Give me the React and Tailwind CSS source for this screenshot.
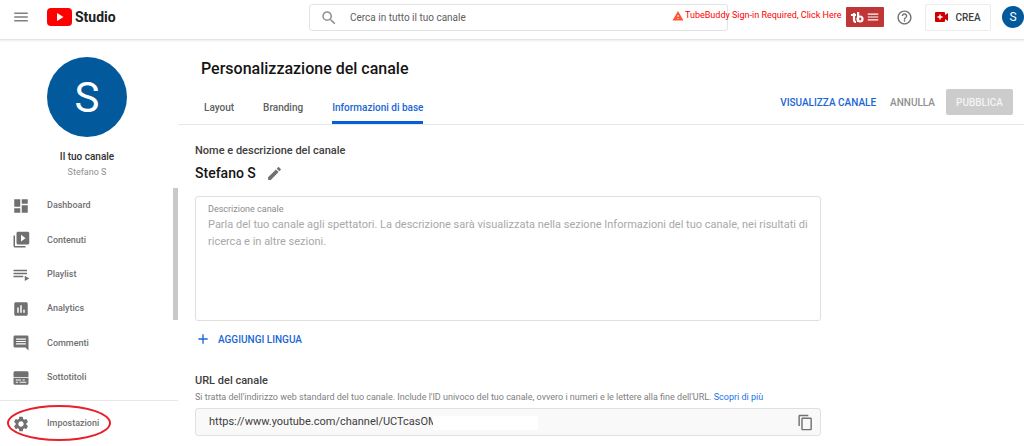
import React from 'react'
import {
    MdAdd,
    MdContentCopy,
    MdDashboard,
    MdEdit,
    MdHelpOutline,
    MdInsertChart,
    MdMenu,
    MdSearch,
    MdSettings,
    MdWarning,
} from 'react-icons/md'

function VideosIcon({ size }) {
    return (
        <svg width={size} height={size} viewBox="0 0 24 24" fill="currentColor">
            <path fillRule="evenodd" d="M8 1h13c1.100 0 2 .9 2 2v13c0 1.100-.9 2-2 2H8c-1.100 0-2-.9-2-2V3c0-1.100.9-2 2-2zM12 5v9l6-4.500z" />
            <path d="M2 6h2v14h14v2H4c-1.100 0-2-.9-2-2z" />
        </svg>
    )
}

function PlaylistIcon({ size }) {
    return (
        <svg width={size} height={size} viewBox="0 0 24 24" fill="currentColor">
            <path d="M2 5h18v2H2zM2 9h18v2H2zM2 13h13v2H2zM17 13l6 3.500-6 3.500z" />
        </svg>
    )
}

function CommentIcon({ size }) {
    return (
        <svg width={size} height={size} viewBox="0 0 24 24" fill="currentColor">
            <path d="M22 4c0-1.100-.9-2-2-2H4c-1.100 0-2 .9-2 2v12c0 1.100.9 2 2 2h14l4 4V4zM18.500 14h-13v-1.700h13V14zm0-3.200h-13V9.200h13v1.600zm0-3.200h-13V6h13v1.600z" />
        </svg>
    )
}

function SubtitlesIcon({ size }) {
    return (
        <svg width={size} height={size} viewBox="0 0 24 24" fill="currentColor">
            <path
                fillRule="evenodd"
                d="M4 3h16c1.100 0 2 .9 2 2v14c0 1.100-.9 2-2 2H4c-1.100 0-2-.9-2-2V5c0-1.100.9-2 2-2zM2 10.500v1.200h20V10.500zM5 14v1.300h7V14zM14 14v1.300h3V14zM5 17v1.300h3V17zM10 17v1.300h9V17z"
            />
        </svg>
    )
}

const navItems = [
    { label: 'Dashboard', Icon: MdDashboard },
    { label: 'Contenuti', Icon: VideosIcon },
    { label: 'Playlist', Icon: PlaylistIcon },
    { label: 'Analytics', Icon: MdInsertChart },
    { label: 'Commenti', Icon: CommentIcon },
    { label: 'Sottotitoli', Icon: SubtitlesIcon },
]

const tabs = ['Layout', 'Branding', 'Informazioni di base']

function Logo() {
    return (
        <a href="#" className="flex items-center gap-[3px]">
            <svg width="25" height="18" viewBox="0 0 25 18">
                <rect width="25" height="18" rx="4" fill="#ff0000" />
                <path d="M10 5l6.500 4-6.500 4z" fill="#fff" />
            </svg>
            <span className="text-[14px] leading-5 font-bold text-[#212121]">Studio</span>
        </a>
    )
}

function Header() {
    return (
        <header className="flex h-10 items-start border-b border-[#e4e4e4] shadow-[0_1px_2px_rgba(0,0,0,0.08)]">
            <div className="flex h-[34px] w-[309px] shrink-0 items-center gap-[17px] pl-3">
                <button aria-label="Menu" className="text-[#808080]">
                    <MdMenu size={18} />
                </button>
                <Logo />
            </div>
            <label className="mt-1 flex h-[27px] flex-1 items-center gap-3 rounded-[3px] border border-[#e3e3e3] pl-[10px]">
                <MdSearch size={18} className="shrink-0 text-[#909090]" />
                <input
                    type="text"
                    aria-label="Cerca"
                    placeholder="Cerca in tutto il tuo canale"
                    className="w-full min-w-0 text-[10px] outline-none placeholder:text-[#606060]"
                />
            </label>
            <div className="-ml-14 flex h-[34px] shrink-0 items-center">
                <a href="#" className="flex w-[174px] items-center gap-px pb-[2px] text-[9px] whitespace-nowrap text-[#ff0000]">
                    <MdWarning size={12} className="text-[#ff5533]" />
                    TubeBuddy Sign-in Required, Click Here
                </a>
                <button aria-label="TubeBuddy" className="flex h-5 w-[38px] items-center justify-center gap-[2px] rounded-[1px] bg-[#c03535] text-white">
                    <svg width="13" height="11" viewBox="0 0 13 11" fill="none" stroke="currentColor" strokeWidth="2.200">
                        <path d="M0 3h5M3 1v7q0 2 2 2M7.100 0v10" />
                        <circle cx="9" cy="7" r="2.500" />
                    </svg>
                    <MdMenu size={14} />
                </button>
                <button aria-label="Guida" className="ml-3 text-[#707070]">
                    <MdHelpOutline size={17} />
                </button>
                <button className="ml-3 flex h-[27px] w-[66px] items-center justify-center gap-[7px] rounded-[2px] border border-[#ececec] text-[10px] font-medium text-[#404040]">
                    <svg width="13" height="10" viewBox="0 0 13 10">
                        <path d="M1 0h8q1 0 1 1v2l3-2v8l-3-2v2q0 1-1 1H1q-1 0-1-1V1q0-1 1-1z" fill="#cc0000" />
                        <path d="M5 2.500v5M2.500 5h5" stroke="#fff" strokeWidth="1.400" />
                    </svg>
                    CREA
                </button>
                <div className="ml-[11px] w-[22px] overflow-hidden">
                    <div className="flex size-[22px] items-center justify-center rounded-full bg-[#02599c] text-[12px] text-white">S</div>
                </div>
            </div>
        </header>
    )
}

function Sidebar() {
    return (
        <aside className="w-[178px] shrink-0">
            <div className="flex h-[148px] flex-col items-center pt-[17px] pr-1">
                <div className="flex size-20 items-center justify-center rounded-full bg-[#02599c] text-[42px] text-white">S</div>
                <p className="mt-3 text-[10px] leading-4 font-medium text-[#303030]">Il tuo canale</p>
                <p className="text-[9px] leading-[14px] text-[#909090]">Stefano S</p>
            </div>
            <div className="flex h-[213px] items-start border-b border-[#e6e6e6]">
                <nav className="grid h-[207px] flex-1 grid-rows-6 pt-px">
                    {navItems.map(({ label, Icon }) => (
                        <a key={label} href="#" className="flex items-center gap-[17px] pl-3 text-[9px] font-medium text-[#707070]">
                            <Icon size={18} />
                            {label}
                        </a>
                    ))}
                </nav>
                <div className="h-[132px] w-[5px] bg-[#c9c9c9]" />
            </div>
            <a href="#" className="relative flex h-[45px] items-center gap-[17px] pl-3 text-[9px] font-medium text-[#707070]">
                <MdSettings size={18} />
                Impostazioni
                <span className="absolute top-1 left-[7px] h-9 w-[104px] rounded-[50%] border-2 border-[#e8202c]" />
            </a>
        </aside>
    )
}

export default function App() {
    return (
        <div className="bg-white font-[Roboto,sans-serif]">
            <Header />
            <div className="flex">
                <Sidebar />
                <main className="min-w-0 flex-1">
                    <h1 className="pt-[18px] pl-[23px] text-[16px] leading-[22px] font-medium text-[#151515]">
                        Personalizzazione del canale
                    </h1>
                    <div className="flex h-[45px] items-end justify-between border-b border-[#e6e6e6] pr-[11px] pl-[26px]">
                        <div role="tablist" className="flex gap-[29px] self-stretch pt-[13px] text-[10px] font-medium">
                            {tabs.map((tab) => (
                                <button
                                    key={tab}
                                    role="tab"
                                    aria-selected={tab === 'Informazioni di base'}
                                    className="rounded-t-[1px] border-b-3 border-transparent text-[#606060] aria-selected:border-[#065fd4] aria-selected:text-[#1a66d6]"
                                >
                                    {tab}
                                </button>
                            ))}
                        </div>
                        <div className="flex items-center pb-[9px] text-[10px] font-medium">
                            <a href="#" className="text-[#1a66d6]">VISUALIZZA CANALE</a>
                            <button className="ml-[14px] text-[#909090]">ANNULLA</button>
                            <button disabled className="ml-[11px] h-[26px] w-[67px] rounded-[2px] bg-[#cccccc] text-[#f4f4f4]">PUBBLICA</button>
                        </div>
                    </div>

                    <section className="max-w-[643px] pt-[18px] pl-[17px]">
                        <h2 className="text-[11px] leading-4 font-medium text-[#404040]">Nome e descrizione del canale</h2>
                        <div className="mt-1 flex h-5 items-center gap-[10px] text-[14px] font-medium text-[#151515]">
                            Stefano S
                            <button aria-label="Modifica" className="text-[#707070]">
                                <MdEdit size={17} />
                            </button>
                        </div>
                        <div className="mt-[13px] h-[125px] rounded-[3px] border border-[#e0e0e0] px-3 pt-[6px]">
                            <label htmlFor="description" className="block text-[9px] leading-3 text-[#8c8c8c]">Descrizione canale</label>
                            <textarea
                                id="description"
                                placeholder="Parla del tuo canale agli spettatori. La descrizione sarà visualizzata nella sezione Informazioni del tuo canale, nei risultati di ricerca e in altre sezioni."
                                className="mt-px block h-[98px] w-full resize-none text-[11px] leading-[17px] outline-none placeholder:text-[#a8a8a8]"
                            />
                        </div>
                        <button className="mt-2 flex h-5 items-center gap-[7px] text-[10px] font-medium text-[#1a66d6]">
                            <MdAdd size={16} />
                            AGGIUNGI LINGUA
                        </button>

                        <h2 className="mt-6 text-[11px] leading-4 font-medium text-[#404040]">URL del canale</h2>
                        <p className="text-[9px] leading-4 whitespace-nowrap text-[#808080]">
                            Si tratta dell'indirizzo web standard del tuo canale. Include l'ID univoco del tuo canale, ovvero i numeri e le lettere alla fine dell'URL.{' '}
                            <a href="#" className="text-[#1a73e8]">Scopri di più</a>
                        </p>
                        <div className="mt-[3px] flex h-7 items-center rounded-[3px] border border-[#e0e0e0] bg-[#f9f9f9] pr-[6px] pl-[13px]">
                            <div className="relative flex-1">
                                <input
                                    readOnly
                                    aria-label="URL del canale"
                                    value="https://www.youtube.com/channel/UCTcasOM"
                                    className="block w-full text-[11px] text-[#404040] outline-none"
                                />
                                <span className="absolute top-[2px] left-[224px] h-[14px] w-[105px] bg-white" />
                            </div>
                            <button aria-label="Copia" className="text-[#707070]">
                                <MdContentCopy size={17} />
                            </button>
                        </div>
                    </section>
                </main>
            </div>
        </div>
    )
}
